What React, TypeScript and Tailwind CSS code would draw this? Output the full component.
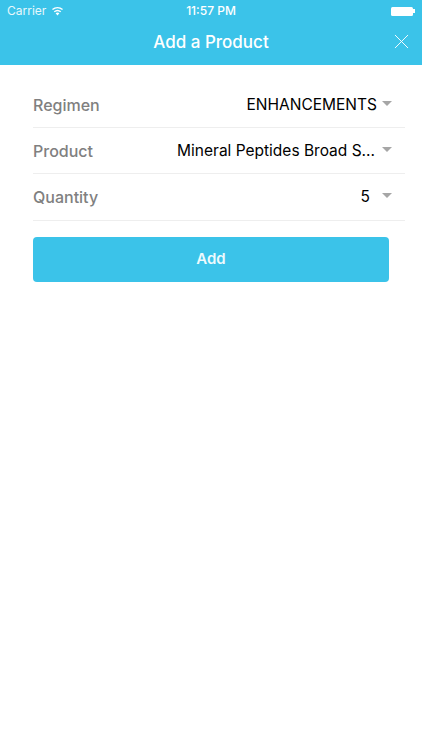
import React from 'react';
import { X } from 'lucide-react';

const rows = [
  { label: 'Regimen', value: 'ENHANCEMENTS', pad: 'pr-[5px]' },
  { label: 'Product', value: 'Mineral Peptides Broad S...', pad: 'pr-[7px]' },
  { label: 'Quantity', value: '5', pad: 'pr-[12px]' },
];

const App: React.FC = () => {
  return (
    <div className="h-[750px] w-[422px] overflow-hidden bg-white font-['Inter',sans-serif]">
      {/* Status bar + nav */}
      <div className="h-[65px] bg-[#3bc3e9] text-white">
        <div className="flex h-[22px] items-center justify-between pl-[7px] pr-[7px] text-[12px]">
          <div className="flex w-[120px] items-center gap-[5px]">
            <span className="text-[#e8f8fc]">Carrier</span>
            <svg width="13" height="10" viewBox="0 0 13 10" fill="white">
              <path d="M6.5 9.6 4.6 7.3a3 3 0 0 1 3.8 0Z" />
              <path d="M3.7 6.3 2.8 5.2a5.8 5.8 0 0 1 7.4 0L9.3 6.3a4.4 4.4 0 0 0-5.6 0Z" />
              <path d="M1.9 4.1 1 3a8.6 8.6 0 0 1 11 0l-.9 1.1a7.2 7.2 0 0 0-9.2 0Z" />
            </svg>
          </div>
          <span className="font-medium">11:57 PM</span>
          <div className="flex w-[120px] items-center justify-end">
            <div className="h-[9px] w-[22px] rounded-[1.5px] bg-white" />
            <div className="h-[4px] w-[1.5px] bg-white" />
          </div>
        </div>
        <div className="relative flex h-[42px] items-center justify-center">
          <span className="text-[17px] font-medium">Add a Product</span>
          <X size={25} strokeWidth={0.9} className="absolute right-[8px] top-[7px]" />
        </div>
      </div>

      {/* Form */}
      <div className="pl-[33px] pr-[17px] pt-[17px]">
        {rows.map((row) => (
          <div key={row.label} className="flex h-[46.2px] items-center justify-between border-b border-[#eeeeee] pr-[13px]">
            <span className="text-[16px] font-medium text-[#808080]">{row.label}</span>
            <div className="flex items-center">
              <span className={`text-[15.5px] text-black ${row.pad}`}>{row.value}</span>
              <div className="mb-[2px] h-0 w-0 border-x-[5px] border-t-[5px] border-x-transparent border-t-[#a6a6a6]" />
            </div>
          </div>
        ))}
        <button className="mt-[16px] flex h-[45px] w-[356px] items-center justify-center rounded-[4px] bg-[#3bc3e9] pt-[1px] text-[15px] font-semibold text-[#eefafd]">
          Add
        </button>
      </div>
    </div>
  );
};

export default App;
